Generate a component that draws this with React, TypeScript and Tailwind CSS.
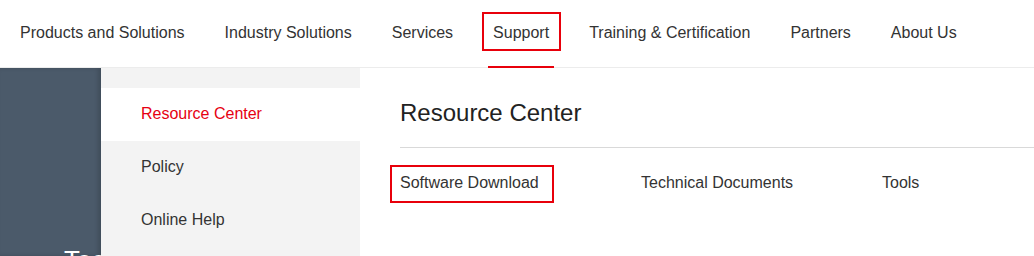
import React from "react";

const navItems = [
  "Products and Solutions",
  "Industry Solutions",
  "Services",
  "Support",
  "Training & Certification",
  "Partners",
  "About Us",
];

const sideItems = ["Resource Center", "Policy", "Online Help"];

const tabs = ["Software Download", "Technical Documents", "Tools"];

export default function App() {
  return (
    <div className="w-[1034px] h-[256px] overflow-hidden bg-white font-['Liberation_Sans',Arial,sans-serif] text-[#333]">
      {/* Top navigation */}
      <nav className="flex h-[68px] border-b border-[#ececec]">
        {navItems.map((item) => (
          <div
            key={item}
            className="relative flex items-center px-[20px] pb-[2px] text-[16px] whitespace-nowrap"
          >
            {item}
            {item === "Support" && (
              <>
                <span className="absolute left-[9px] right-[8px] top-[12px] h-[39px] border-2 border-[#e8000b]" />
                <span className="absolute left-[15px] right-[15px] -bottom-[1px] h-[2px] bg-[#e8000b]" />
              </>
            )}
          </div>
        ))}
      </nav>

      <div className="flex h-[188px]">
        {/* Dark banner strip */}
        <div className="relative w-[101px] shrink-0 overflow-hidden bg-[#4b5a6a] shadow-[inset_-3px_0_4px_rgba(0,0,0,0.15)]">
          <span className="absolute left-[64px] top-[179px] text-[26px] leading-none text-white whitespace-nowrap">
            Tools
          </span>
        </div>

        {/* Sidebar */}
        <aside className="w-[259px] shrink-0 bg-[#f3f3f3] pt-[20px]">
          {sideItems.map((item, i) => (
            <div
              key={item}
              className={`flex h-[53px] items-center pl-[40px] pb-[2px] text-[16px] ${
                i === 0 ? "bg-white text-[#e60012]" : ""
              }`}
            >
              {item}
            </div>
          ))}
        </aside>

        {/* Content */}
        <main className="flex-1 pl-[40px]">
          <h2 className="pt-[30px] pb-[19px] text-[24px] leading-[30px] text-[#222] border-b border-[#d9d9d9]">
            Resource Center
          </h2>
          <div className="flex pt-[17px]">
            {tabs.map((tab, i) => (
              <div key={tab} className="relative w-[241px] h-[38px] flex items-center pb-[2px] text-[16px]">
                {i === 0 && (
                  <span className="absolute -left-[10px] top-0 w-[164px] h-[38px] border-2 border-[#e8000b]" />
                )}
                {tab}
              </div>
            ))}
          </div>
        </main>
      </div>
    </div>
  );
}
